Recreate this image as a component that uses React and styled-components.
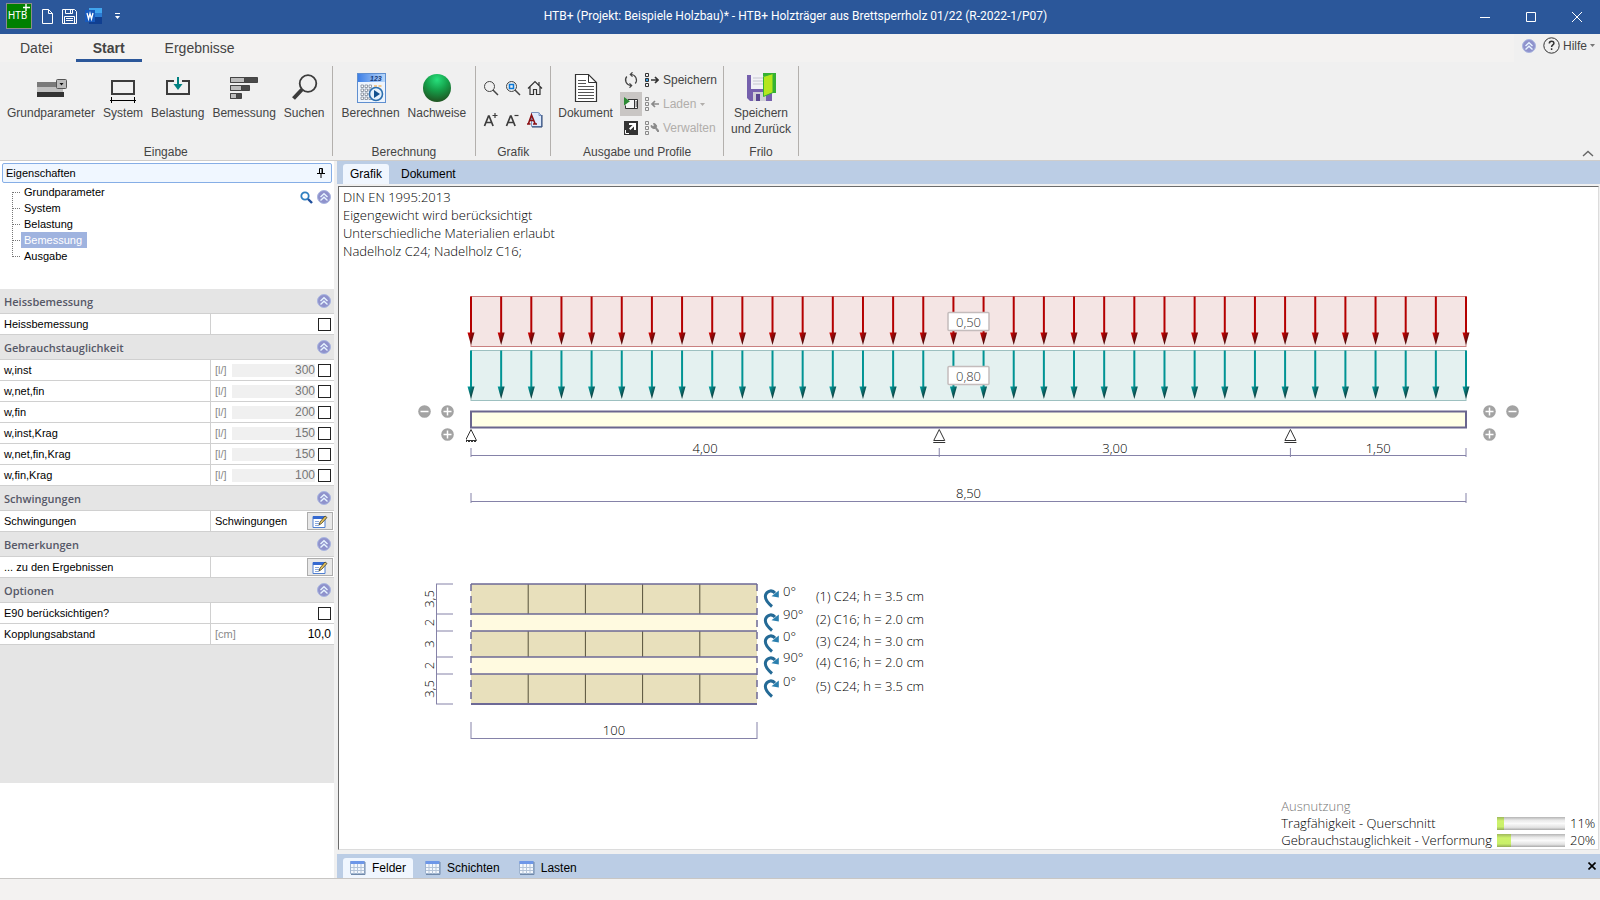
import { useState } from "react";
import styled, { createGlobalStyle } from "styled-components";

const GlobalStyle = createGlobalStyle`
  * {
    box-sizing: border-box;
  }
  body {
    margin: 0;
    background: #f0f0f0;
    color: #444;
    font-family: "Liberation Sans", Arial, sans-serif;
    font-size: 12px;
  }
  button, input {
    font: inherit;
    color: inherit;
    margin: 0;
    padding: 0;
    border: 0;
    background: none;
  }
  svg {
    display: block;
    flex-shrink: 0;
  }
  h1, h2, h3, p, ul, ol {
    margin: 0;
    padding: 0;
    font-weight: inherit;
    font-size: inherit;
    list-style: none;
  }
`;

const Page = styled.div`
  min-height: 100vh;
  display: flex;
  flex-direction: column;
`;

/* ---------- title bar ---------- */

const TitleBar = styled.header`
  height: 34px;
  display: flex;
  align-items: center;
  background: #2b579a;
  color: #fff;
`;

const QuickAccess = styled.div`
  display: flex;
  align-items: center;
  gap: 8px;
  padding: 0 5px 2px 6px;
`;

const IconButton = styled.button`
  display: flex;
  align-items: center;
  justify-content: center;
  min-width: 14px;
`;

const WindowTitle = styled.h1`
  flex: 1;
  text-align: center;
  font-family: Roboto, "Open Sans", sans-serif;
  font-size: 12px;
  line-height: 32px;
  height: 34px;
`;

const WindowButton = styled.button`
  width: 46px;
  height: 34px;
  display: flex;
  align-items: center;
  justify-content: center;
`;

/* ---------- ribbon ---------- */

const TabRow = styled.nav`
  height: 28px;
  display: flex;
  gap: 6px;
  padding-left: 3px;
  background: #f3f2f1;
`;

const RibbonTab = styled.button`
  padding: 2px 17px 0;
  font-size: 14px;
  font-weight: ${(p) => (p.$active ? 700 : 400)};
  border-bottom: 3px solid ${(p) => (p.$active ? "#2b579a" : "transparent")};
`;

const Help = styled.div`
  display: flex;
  align-items: center;
  gap: 7px;
  margin-left: auto;
  padding: 0 5px 5px 8px;
  background: #f0f0f0;
`;

const HelpButton = styled.button`
  display: flex;
  align-items: center;
  gap: 3px;
`;

const Ribbon = styled.section`
  display: flex;
  height: 99px;
  padding-top: 4px;
  border-bottom: 1px solid #cfcdcb;
`;

const Group = styled.div`
  display: flex;
  flex-direction: column;
  justify-content: space-between;
  height: 90px;
  padding: 0 ${(p) => p.$pad || 6}px;
  border-right: 1px solid #b3b0ad;
`;

const GroupBody = styled.div`
  display: flex;
  gap: 6px;
`;

const GroupName = styled.h2`
  text-align: center;
  line-height: 8px;
`;

const BigButton = styled.button`
  display: flex;
  flex-direction: column;
  align-items: center;
  padding: 6px 1px 0;
  line-height: 16px;
  white-space: pre;

  svg {
    margin-bottom: 1px;
  }
`;

const ToolGrid = styled.div`
  display: grid;
  grid-template-columns: repeat(3, 22px);
  grid-auto-rows: 32px;
  padding-top: 6px;
`;

const ProfileGrid = styled.div`
  display: grid;
  grid-template-columns: 22px auto;
  grid-auto-rows: 24px;
  column-gap: 3px;
  padding-top: 2px;
`;

const ToolButton = styled.button`
  display: flex;
  align-items: center;
  justify-content: center;
  background: ${(p) => (p.$on ? "#c9c6c4" : "none")};
`;

const ProfileButton = styled.button`
  display: flex;
  align-items: center;
  gap: 4px;
  color: #444;

  &:disabled {
    color: #b1aeab;
  }
`;

const Collapse = styled.button`
  margin: auto 6px 3px auto;
`;

/* ---------- workspace ---------- */

const Workspace = styled.main`
  flex: 1;
  display: flex;
  gap: 3px;
`;

const Sidebar = styled.aside`
  width: 334px;
  display: flex;
  flex-direction: column;
  background: #fff;
  color: #000;
  font-size: 11px;
`;

const PanelTitle = styled.div`
  display: flex;
  align-items: center;
  justify-content: space-between;
  height: 20px;
  margin: 2px 2px 1px;
  padding: 0 6px 0 3px;
  border: 1px solid #86aee6;
  border-radius: 2px;
  background: #f0f7ff;
`;

const TreeArea = styled.div`
  display: flex;
  justify-content: space-between;
  height: 105px;
  padding-left: 12px;
`;

const TreeItem = styled.li`
  display: flex;
  height: 16px;
`;

const TreeLink = styled.a`
  padding: 0 5px 0 3px;
  line-height: 16px;
  text-decoration: none;
  color: ${(p) => (p.$selected ? "#fff" : "#000")};
  background: ${(p) => (p.$selected ? "#9fb3df" : "none")};
`;

const TreeTools = styled.div`
  display: flex;
  align-items: center;
  gap: 4px;
  height: 16px;
  margin: 5px 3px 0 0;
`;

const SectionHead = styled.h3`
  display: flex;
  align-items: center;
  justify-content: space-between;
  height: 25px;
  padding: 0 3px 0 4px;
  border-bottom: 1px solid #d0d0d0;
  background: #e5e5e5;
  color: #565867;
  font-family: "Open Sans", "Noto Sans", sans-serif;
  font-weight: 600;
  font-size: 11px;
`;

const PropRow = styled.div`
  display: grid;
  grid-template-columns: 211px 1fr;
  height: 21px;
  border-bottom: 1px solid #d0d0d0;
`;

const PropName = styled.label`
  padding-left: 4px;
  border-right: 1px solid #d0d0d0;
  line-height: 20px;
`;

const PropValue = styled.div`
  display: flex;
  align-items: center;
  justify-content: flex-end;
  gap: 3px;
  min-width: 0;
  padding: 0 3px 0 4px;
`;

const Unit = styled.span`
  color: #8a8a8a;
  margin-right: auto;
`;

const NumberInput = styled.input`
  width: ${(p) => (p.disabled ? 83 : 60)}px;
  height: 13px;
  font-size: 12px;
  text-align: right;
  color: ${(p) => (p.disabled ? "#777" : "#000")};
  background: ${(p) => (p.disabled ? "#f0f0f0" : "#fff")};
`;

const TextInput = styled.input`
  flex: 1;
  min-width: 0;
`;

const Check = styled.input`
  appearance: none;
  width: 13px;
  height: 13px;
  border: 1px solid #222;
  background: #fff;

  &:checked {
    background: #2b579a;
  }
`;

const EditButton = styled.button`
  display: flex;
  align-items: center;
  justify-content: center;
  width: 26px;
  height: 18px;
  margin-right: -2px;
  border: 1px solid #adadad;
  background: #e8e8e8;
`;

const Filler = styled.div`
  height: 138px;
  background: #e5e5e5;
`;

const Content = styled.section`
  flex: 1;
  min-width: 0;
  display: flex;
  flex-direction: column;
`;

const TabStrip = styled.div`
  display: flex;
  align-items: flex-end;
  height: ${(p) => (p.$bottom ? 24 : 23)}px;
  padding: 0 4px 0 6px;
  background: #bbcde5;
`;

const ViewTab = styled.button`
  display: flex;
  align-items: center;
  gap: 6px;
  height: 20px;
  padding: 0 7px;
  margin-right: 5px;
  border-radius: 3px 3px 0 0;
  color: #000;
  background: ${(p) => (p.$active ? "#f0f6fe" : "none")};
`;

const CloseTab = styled.button`
  margin: auto 0 auto auto;
`;

const Canvas = styled.div`
  flex: 1;
  display: flex;
  flex-direction: column;
  margin: 2px 1px 4px;
  border: 1px solid #dcdcdc;
  border-top-color: #6b6b6b;
  border-left-color: #6b6b6b;
  background: #fff;
  color: #000;
  font-family: "Open Sans", "Noto Sans", sans-serif;
  font-weight: 300;
  font-size: 13px;
`;

const Notes = styled.div`
  padding: 1px 0 0 4px;
  line-height: 18px;
`;

const BeamRow = styled.div`
  display: flex;
  gap: 12px;
  margin-top: 30px;
  padding: 0 79px;
`;

const BeamSvg = styled.svg`
  flex: 1;
  min-width: 0;
  height: auto;
`;

const Nodes = styled.div`
  display: grid;
  grid-template-columns: 13px 13px;
  grid-auto-rows: 13px;
  gap: 10px;
  margin-top: 115px;
  direction: ${(p) => (p.$mirror ? "rtl" : "ltr")};

  button:last-child {
    grid-column: 2;
  }
`;

const SectionRow = styled.div`
  display: flex;
  margin-top: 68px;
  padding-left: 79px;
`;

const Layers = styled.ol`
  padding-top: 5px;
`;

const Layer = styled.li`
  display: grid;
  grid-template-columns: 20px 33px auto;
  grid-template-rows: 100%;
  align-items: center;
  height: ${(p) => p.$h}px;
  line-height: 17px;
`;

const Angle = styled.span`
  padding-bottom: 14px;
`;

const LayerText = styled.span`
  padding-bottom: 4px;
`;

const Usage = styled.div`
  display: grid;
  grid-template-columns: auto 68px 24px;
  grid-auto-rows: 17px;
  column-gap: 5px;
  align-items: center;
  margin: auto 4px 0 auto;
  line-height: 17px;
`;

const UsageTitle = styled.h2`
  grid-column: 1 / -1;
  color: #777;
`;

const Meter = styled.div`
  height: 13px;
  background: linear-gradient(#b4b4b4, #e9e9e9 25%, #fafafa 50%, #e2e2e2 80%, #aaa);
`;

const MeterFill = styled.div`
  height: 13px;
  background: linear-gradient(#9fb85c, #cdf26c 30%, #c9f06a 75%, #93ab58);
`;

const StatusBar = styled.footer`
  height: 22px;
  border-top: 1px solid #c8c6c4;
  background: #f3f2f1;
`;

/* ---------- icons ---------- */

const AppLogo = () => (
  <svg width="26" height="26" viewBox="0 0 26 26">
    <rect x=".5" y=".5" width="25" height="25" fill="#008000" stroke="#8c8c8c" />
    <text x="2" y="16" fill="#fff" fontSize="10" fontFamily="Roboto, sans-serif">HTB</text>
    <path d="M20 1v7M17 4.500h7" stroke="#fff" strokeWidth="1.400" />
  </svg>
);

const NewIcon = () => (
  <svg width="11" height="15" viewBox="0 0 11 15" fill="none" stroke="#fff">
    <path d="M.5.5h6l4 4v10h-10zM6.500.5v4h4" />
  </svg>
);

const DiskIcon = () => (
  <svg width="15" height="15" viewBox="0 0 15 15" fill="none" stroke="#fff">
    <path d="M.5.5h12l2 2v12h-14zM3.500.5v4h7v-4M8.500 1v3M2.500 14.500v-7h10v7M4 9.500h7M4 11.500h7" />
  </svg>
);

const WordIcon = () => (
  <svg width="17" height="16" viewBox="0 0 17 16">
    <path d="M4 0h13v5H4z" fill="#41a5ee" />
    <path d="M4 5h13v4H4z" fill="#2b7cd3" />
    <path d="M4 9h13v7H4z" fill="#103f91" />
    <path d="M0 2h10v12H0z" fill="#185abd" />
    <path d="M2 5l1.500 6L5 5.500 6.500 11 8 5" fill="none" stroke="#fff" strokeWidth="1.300" />
  </svg>
);

const MoreIcon = () => (
  <svg width="5" height="6" viewBox="0 0 5 6" fill="#fff">
    <path d="M0 0h5v1H0zM0 3h5L2.500 6z" />
  </svg>
);

const UpIcon = () => (
  <svg width="14" height="14" viewBox="0 0 14 14">
    <circle cx="7" cy="7" r="6.500" fill="#8f92cc" stroke="#a9b6e0" />
    <path d="M3.500 7L7 3.700 10.500 7M3.500 10.500L7 7.200l3.500 3.300" fill="none" stroke="#e6f4ff" strokeWidth="1.400" />
  </svg>
);

const HelpIcon = () => (
  <svg width="17" height="17" viewBox="0 0 17 17" fill="none" stroke="#333">
    <circle cx="8.500" cy="8.500" r="7.700" />
    <path d="M6.300 6.500c0-3 4.600-3 4.600-.3 0 1.700-2.300 1.800-2.300 3.800M8.600 11.300v1.700" strokeWidth="1.500" />
  </svg>
);

const Caret = ({ color = "#777" }) => (
  <svg width="5" height="3" viewBox="0 0 5 3" fill={color}>
    <path d="M0 0h5L2.500 3z" />
  </svg>
);

const BaseIcon = () => (
  <svg width="32" height="32" viewBox="0 0 32 32">
    <path d="M2 10h26v5H2z" fill="#7a7a7a" />
    <path d="M2 15h26v5H2z" fill="#c0c0c0" />
    <path d="M2 20h27v5H2z" fill="#333" />
    <rect x="21.500" y="7.500" width="10" height="9" rx="1" fill="#bbb" stroke="#555" />
    <path d="M24.500 11h4l-2 2.500z" fill="#111" />
  </svg>
);

const SystemIcon = () => (
  <svg width="32" height="32" viewBox="0 0 32 32" fill="none" stroke="#3c3c3c">
    <path d="M5 9h22v13H5z" strokeWidth="2" />
    <path d="M3 28.500h26M4.500 25v6M27.500 25v6" stroke="#000" />
  </svg>
);

const LoadIcon = () => (
  <svg width="32" height="32" viewBox="0 0 32 32" fill="none">
    <path d="M5 9h22v13H5z" stroke="#3c3c3c" strokeWidth="2" />
    <path d="M12 7h8v4h-8z" fill="#f0f0f0" />
    <path d="M16 5v10" stroke="#008080" strokeWidth="2" />
    <path d="M11.500 12h9L16 18z" fill="#008080" />
  </svg>
);

const DesignIcon = () => (
  <svg width="32" height="32" viewBox="0 0 32 32" stroke="#444">
    <path d="M2.500 5.500h27v5h-27zM2.500 13.500h19v5h-19zM2.500 21.500h11v5h-11z" fill="#4a4a4a" />
    <path d="M2.500 5.500h14v5h-14zM2.500 13.500h11v5h-11zM2.500 21.500h6v5h-6z" fill="#bdbdbd" />
  </svg>
);

const SearchIcon = () => (
  <svg width="32" height="32" viewBox="0 0 32 32" fill="none" stroke="#3c3c3c">
    <circle cx="20" cy="11.500" r="8.300" strokeWidth="1.800" />
    <path d="M14 17.500L5.500 26.500" strokeWidth="4" />
  </svg>
);

const CalcIcon = () => (
  <svg width="32" height="32" viewBox="0 0 32 32">
    <defs>
      <linearGradient id="calc" x1="0" x2="1">
        <stop offset="0" stopColor="#3f80e6" />
        <stop offset="1" stopColor="#b9d8fb" />
      </linearGradient>
    </defs>
    <path d="M2 1h29v30H2z" fill="#5f8fd0" />
    <path d="M3 10h27v20H3z" fill="#edf4fd" />
    <path d="M3 2h27v8H3z" fill="url(#calc)" />
    <text x="15" y="8.500" fontSize="7" fontStyle="italic" fontWeight="700" fill="#173d7c">123</text>
    <g fill="#fff" stroke="#7f8896" strokeWidth=".8">
      {[13, 17, 21, 25].map((y) =>
        [6, 10, 14].map((x) => <path key={x + "-" + y} d={`M${x} ${y}h2.500v2.500h-2.500z`} />)
      )}
    </g>
    <path d="M19 13h3v2h-3zM23.500 13h3v2h-3z" fill="#f4c98e" />
    <circle cx="21" cy="22" r="6.500" fill="#e4f1fd" stroke="#2d6fae" strokeWidth="1.600" />
    <path d="M19 18l6 4-6 4z" fill="#12518f" />
  </svg>
);

const BallIcon = () => (
  <svg width="32" height="32" viewBox="0 0 32 32">
    <defs>
      <radialGradient id="ball" cx=".5" cy=".2" r=".85">
        <stop offset="0" stopColor="#27e07c" />
        <stop offset=".45" stopColor="#15a04a" />
        <stop offset="1" stopColor="#204a1c" />
      </radialGradient>
    </defs>
    <circle cx="16" cy="16" r="14" fill="url(#ball)" />
  </svg>
);

const ZoomIcon = ({ fit }) => (
  <svg width="16" height="16" viewBox="0 0 16 16" fill="none" stroke="#444">
    <circle cx="6.500" cy="6.500" r="5" />
    <path d="M10 10l5 5" strokeWidth="1.500" />
    {fit && <path d="M4.500 4.500h4v4h-4z" stroke="#0a78d7" strokeWidth="1.500" />}
  </svg>
);

const HomeIcon = () => (
  <svg width="16" height="16" viewBox="0 0 16 16" fill="none" stroke="#333" strokeWidth="1.200">
    <path d="M1 8.500L8 1.500l7 7M3 7v7.500h3.500v-5h3v5H13V7M12 2v3" />
  </svg>
);

const FontSizeIcon = ({ plus }) => (
  <svg width="16" height="16" viewBox="0 0 16 16" fill="none" stroke="#3c3c3c">
    <path d="M1.500 14L5.500 4h.6l4 10M3 10.500h5.500" strokeWidth="1.700" />
    <path d={plus ? "M9.500 3.500h5M12 1v5" : "M9.500 3.500h4"} strokeWidth="1.200" />
  </svg>
);

const FontPageIcon = () => (
  <svg width="16" height="16" viewBox="0 0 16 16">
    <path d="M4.500.5h7l3 3v11h-10z" fill="#dfeafc" stroke="#7b94c0" />
    <path d="M12 .5v3h3" fill="none" stroke="#7b94c0" />
    <path d="M15 3v12H5" fill="none" stroke="#27406f" />
    <path d="M1.500 11.500L4.500 3 8 11.500M3 8.500h4M0 12h3.500M6 12h4" fill="none" stroke="#8b1014" strokeWidth="1.600" />
  </svg>
);

const DocumentIcon = () => (
  <svg width="32" height="32" viewBox="0 0 32 32" fill="none" stroke="#333">
    <path d="M5.500 2.500h13l8 8v19h-21z" fill="#fff" strokeWidth="1.200" />
    <path d="M18.500 2.500v8h8" />
    <path d="M8 8.500h8M8 11.500h8M8 14.500h16M8 17.500h16M8 20.500h16M8 23.500h16M8 26.500h16" stroke="#555" />
  </svg>
);

const RefreshIcon = () => (
  <svg width="16" height="16" viewBox="0 0 16 16" fill="none" stroke="#444" strokeWidth="1.200">
    <path d="M7.500 2.500H8a5.500 5.500 0 0 1 4.200 9M8.500 13.500H8a5.500 5.500 0 0 1-4.200-9" />
    <path d="M9.500.3L7.300 2.500l2.200 2.200M6.500 11.300l2.200 2.200-2.200 2.200" />
  </svg>
);

const PreviewIcon = () => (
  <svg width="16" height="14" viewBox="0 0 16 14">
    <path d="M5 2.500h9.500v9h-12v-3" fill="#f5f5f5" stroke="#333" />
    <path d="M11.500 3v8" stroke="#333" />
    <path d="M12.500 5h2M12.500 7h2M12.500 9h2" stroke="#333" />
    <path d="M1 0v8.500l6-4.200z" fill="#2c8a34" />
  </svg>
);

const PopOutIcon = () => (
  <svg width="14" height="14" viewBox="0 0 14 14">
    <path d="M0 0h14v14H0z" fill="#333" />
    <path d="M5 2h7v7h-2V5.400L6.400 9 5 7.600 8.600 4H5z" fill="#fff" />
    <path d="M1.500 9v3.500H5" fill="none" stroke="#fff" />
  </svg>
);

const profileMarks = {
  save: "M6 7h7M10 4l3 3-3 3",
  load: "M14 7H7M10 4L7 7l3 3",
};

const ProfileIcon = ({ kind }) => {
  const on = kind === "save";
  return (
    <svg width="14" height="14" viewBox="0 0 14 14" fill="none" stroke={on ? "#333" : "#8a8a8a"}>
      <path d="M.5.5h3v3h-3zM.5 10.500h3v3h-3z" />
      <path d="M.5 5.500h3v3h-3z" fill={on ? "#3aa0e8" : "none"} />
      {kind === "manage" ? (
        <path d="M6 4.500a3 3 0 0 0 4.300 2.800L13 11l1-1.200-2.700-3A3 3 0 0 0 8.500 2.500l1 2-1.500 1z" fill="#8a8a8a" />
      ) : (
        <path d={profileMarks[kind]} strokeWidth="1.700" />
      )}
    </svg>
  );
};

const SaveBackIcon = () => (
  <svg width="32" height="32" viewBox="0 0 32 32">
    <path d="M2 3h25v26H5l-3-3z" fill="#7560ad" />
    <path d="M6 3h14v14H6z" fill="#f2f2f6" />
    <path d="M8 6h10M8 9h10M8 12h10" stroke="#c6c6d0" />
    <path d="M8 20h13v9H8z" fill="#cfcfd6" />
    <path d="M11 22h4v7h-4z" fill="#5a4790" />
    <path d="M18 1h13v20h-3V4H18z" fill="#35b233" />
    <path d="M18.500 4.500L28 1.500v19l-9.500 4z" fill="#b5e61d" stroke="#35b233" />
  </svg>
);

const ChevronIcon = () => (
  <svg width="12" height="7" viewBox="0 0 12 7" fill="none" stroke="#666" strokeWidth="1.400">
    <path d="M1 6l5-4.500L11 6" />
  </svg>
);

const PinIcon = () => (
  <svg width="8" height="10" viewBox="0 0 8 10" fill="none" stroke="#000">
    <path d="M2.500 5.500v-5h3v5M5 1v4.500M0 5.500h8M4 6v4" />
  </svg>
);

const LensIcon = () => (
  <svg width="13" height="13" viewBox="0 0 13 13" fill="none">
    <circle cx="5" cy="5" r="3.700" stroke="#2f7fc0" strokeWidth="1.800" />
    <path d="M8 8l4 4" stroke="#1f4f9c" strokeWidth="2.400" />
  </svg>
);

const EditIcon = () => (
  <svg width="16" height="13" viewBox="0 0 16 13">
    <path d="M1 1.500h12v11H1z" fill="#fff" stroke="#4f7fd0" />
    <path d="M1 1h12v3H1z" fill="#3569d0" />
    <path d="M3 6.500h4M3 8.500h4M3 10.500h4" stroke="#8ba9dc" />
    <path d="M7 10l1-3 5-6 2 1.500-5.500 6z" fill="#e5c15c" stroke="#3d3d2a" strokeWidth=".8" />
  </svg>
);

const TableIcon = () => (
  <svg width="16" height="14" viewBox="0 0 16 14">
    <path d="M.5.5h14v12H.5z" fill="#f4f8fd" stroke="#9fb4cf" />
    <path d="M.5 0h14v3H.5z" fill="#6d97e8" />
    <path d="M4 3v10M7.500 3v10M11 3v10M1 6.500h14M1 9.500h14" stroke="#b4c4d8" />
    <path d="M15 1v12.500H1" fill="none" stroke="#7089aa" />
  </svg>
);

const CrossIcon = () => (
  <svg width="8" height="8" viewBox="0 0 8 8" stroke="#000" strokeWidth="1.600">
    <path d="M.5.5l7 7M7.500.5l-7 7" />
  </svg>
);

const NodeIcon = ({ plus }) => (
  <svg width="13" height="13" viewBox="0 0 13 13">
    <circle cx="6.500" cy="6.500" r="6.300" fill="#a3a3a3" />
    <path d={plus ? "M2.500 6.500h8M6.500 2.500v8" : "M2.500 6.500h8"} stroke="#fff" strokeWidth="1.500" />
  </svg>
);

const RotateIcon = () => (
  <svg width="17" height="20" viewBox="0 0 17 20">
    <path d="M9 18.500C3 13.500 1.200 9.500 3 6 5 2.300 9.500 1.800 12 5" fill="none" stroke="#246a96" strokeWidth="3" />
    <path d="M15.800 2.500v7l-7.300-1.200z" fill="#2a7fae" />
  </svg>
);

/* ---------- drawings ---------- */

const SPANS = [4, 3, 1.5];
const TOTAL = 8.5;
const LEFT = 5;
const SCALE = 995 / TOTAL;
const ARROWS = 33;

function Load({ y, value, color, dark, fill, line, id }) {
  const xs = Array.from({ length: ARROWS + 1 }, (_, i) => LEFT + (i * 995) / ARROWS);
  return (
    <g>
      <defs>
        <linearGradient id={id} x1="0" x2="1" y1="0" y2="1">
          <stop offset="0" stopColor={color} />
          <stop offset="1" stopColor="#111" />
        </linearGradient>
      </defs>
      <rect x={LEFT} y={y} width="995" height="50" fill={fill} stroke={line} />
      {xs.map((x) => (
        <g key={x}>
          <path d={`M${x} ${y}v37`} stroke={dark} strokeWidth="2" />
          <path d={`M${x - 3.5} ${y + 36}h7l-3.500 12.500z`} fill={`url(#${id})`} />
        </g>
      ))}
      <rect x="482" y={y + 16} width="41" height="18" rx="1" fill="#fff" stroke="#c4bcbc" strokeWidth="1.500" />
      <text x="502.500" y={y + 30} textAnchor="middle" fill="#333">{value}</text>
    </g>
  );
}

function Support({ x, fixed }) {
  return (
    <g fill="none" stroke="#333">
      <path d={`M${x} 139.500l-5.500 11h11z`} />
      {fixed ? (
        <path d={`M${x - 6} 151.500h12`} strokeDasharray="2 1" />
      ) : (
        <path d={`M${x - 6} 152.500h12`} />
      )}
    </g>
  );
}

function Beam() {
  const stops = SPANS.reduce((acc, s) => [...acc, acc[acc.length - 1] + s], [0]);
  const pos = stops.map((s) => LEFT + s * SCALE);
  return (
    <BeamSvg viewBox="0 0 1005 220" role="img" aria-label="Träger" fontSize="13" fill="#000">
      <Load id="red" y={6.5} value="0,50" color="#e00000" dark="#b40000" fill="#f4e5e4" line="#c98080" />
      <Load id="teal" y={60.5} value="0,80" color="#00a8a8" dark="#009494" fill="#e4f1f0" line="#9dc0c0" />
      <rect x={LEFT} y="121.500" width="995" height="16" fill="#ffffe6" stroke="#6a668e" strokeWidth="2" />
      <Support x={pos[0]} fixed />
      <Support x={pos[1]} />
      <Support x={pos[2]} />
      <g stroke="#8582a8">
        <path d={`M${LEFT} 165.500h995M${LEFT} 211.500h995M${LEFT} 203v10M1000 203v10`} />
        {pos.map((x) => <path key={x} d={`M${x} 158v9`} />)}
      </g>
      {SPANS.map((s, i) => (
        <text key={i} x={(pos[i] + pos[i + 1]) / 2} y="163" textAnchor="middle">
          {s.toFixed(2).replace(".", ",")}
        </text>
      ))}
      <text x="502.500" y="208" textAnchor="middle">8,50</text>
    </BeamSvg>
  );
}

const LAYERS = [
  { h: 30, size: "3,5", angle: "0°", text: "(1) C24; h = 3.5 cm" },
  { h: 17, size: "2", angle: "90°", text: "(2) C16; h = 2.0 cm" },
  { h: 26, size: "3", angle: "0°", text: "(3) C24; h = 3.0 cm" },
  { h: 17, size: "2", angle: "90°", text: "(4) C16; h = 2.0 cm" },
  { h: 30, size: "3,5", angle: "0°", text: "(5) C24; h = 3.5 cm" },
];

function CrossSection() {
  let y = 6;
  const rows = LAYERS.map((l) => {
    const row = { ...l, y };
    y += l.h;
    return row;
  });
  return (
    <svg width="345" height="170" viewBox="0 0 345 170" role="img" aria-label="Querschnitt" fontSize="13" fill="#000">
      {rows.map((r, i) => (
        <g key={i}>
          <rect x="53" y={r.y} width="286" height={r.h} fill={i % 2 ? "#fffae0" : "#e8e0bc"} />
          {i % 2 === 0 && [1, 2, 3, 4].map((n) => (
            <path key={n} d={`M${53 + n * 57.2} ${r.y}v${r.h}`} stroke="#55503a" />
          ))}
          <path d={`M53 ${r.y}h286`} stroke="#6d6996" strokeWidth="1.500" />
          <path d={`M18 ${r.y}h17`} stroke="#8582a8" />
          <text transform={`translate(16 ${r.y + r.h / 2}) rotate(-90)`} textAnchor="middle">{r.size}</text>
        </g>
      ))}
      <path d="M53 126h286" stroke="#6d6996" strokeWidth="2" />
      <path d="M53 6v120M339 6v120" stroke="#6d6996" strokeWidth="1.500" strokeDasharray="7 5" />
      <path d="M18.500 6v120M18 126h17M53 144v17M339 144v17M53 160.500h286" stroke="#8582a8" fill="none" />
      <text x="196" y="157" textAnchor="middle">100</text>
    </svg>
  );
}

/* ---------- property data ---------- */

const TREE = ["Grundparameter", "System", "Belastung", "Bemessung", "Ausgabe"];

const SECTIONS = [
  { title: "Heissbemessung", rows: [{ name: "Heissbemessung", type: "check" }] },
  {
    title: "Gebrauchstauglichkeit",
    rows: [
      { name: "w,inst", type: "limit", value: "300" },
      { name: "w,net,fin", type: "limit", value: "300" },
      { name: "w,fin", type: "limit", value: "200" },
      { name: "w,inst,Krag", type: "limit", value: "150" },
      { name: "w,net,fin,Krag", type: "limit", value: "150" },
      { name: "w,fin,Krag", type: "limit", value: "100" },
    ],
  },
  { title: "Schwingungen", rows: [{ name: "Schwingungen", type: "edit", value: "Schwingungen" }] },
  { title: "Bemerkungen", rows: [{ name: "... zu den Ergebnissen", type: "edit", value: "" }] },
  {
    title: "Optionen",
    rows: [
      { name: "E90 berücksichtigen?", type: "check" },
      { name: "Kopplungsabstand", type: "number", value: "10,0" },
    ],
  },
];

function Property({ id, name, type, value }) {
  return (
    <PropRow>
      <PropName htmlFor={id}>{name}</PropName>
      <PropValue>
        {type === "limit" && (
          <>
            <Unit>[l/]</Unit>
            <NumberInput aria-label={name + " Grenzwert"} defaultValue={value} disabled />
          </>
        )}
        {type === "number" && (
          <>
            <Unit>[cm]</Unit>
            <NumberInput id={id} defaultValue={value} />
          </>
        )}
        {type === "edit" && (
          <>
            <TextInput id={id} defaultValue={value} />
            <EditButton aria-label={name + " bearbeiten"}><EditIcon /></EditButton>
          </>
        )}
        {(type === "check" || type === "limit") && <Check id={id} type="checkbox" />}
      </PropValue>
    </PropRow>
  );
}

function Properties() {
  const [selected, setSelected] = useState("Bemessung");
  return (
    <Sidebar>
      <PanelTitle>
        Eigenschaften
        <button aria-label="Anheften"><PinIcon /></button>
      </PanelTitle>
      <TreeArea>
        <ul>
          {TREE.map((t, i) => (
            <TreeItem key={t}>
              <svg width="9" height="16" viewBox="0 0 9 16" fill="none" stroke="#777" strokeDasharray="1 1">
                <path d={`M.5 ${i ? 0 : 8}V${i < TREE.length - 1 ? 16 : 9}M1 8.500h8`} />
              </svg>
              <TreeLink href="#" $selected={t === selected} onClick={() => setSelected(t)}>{t}</TreeLink>
            </TreeItem>
          ))}
        </ul>
        <TreeTools>
          <button aria-label="Suchen"><LensIcon /></button>
          <button aria-label="Alle zuklappen"><UpIcon /></button>
        </TreeTools>
      </TreeArea>
      {SECTIONS.map((s, i) => (
        <div key={s.title}>
          <SectionHead>
            {s.title}
            <button aria-label={s.title + " zuklappen"}><UpIcon /></button>
          </SectionHead>
          {s.rows.map((r, j) => <Property key={r.name} id={`prop-${i}-${j}`} {...r} />)}
        </div>
      ))}
      <Filler />
    </Sidebar>
  );
}

function RibbonBar() {
  return (
    <Ribbon>
      <Group>
        <GroupBody>
          <BigButton><BaseIcon />Grundparameter</BigButton>
          <BigButton><SystemIcon />System</BigButton>
          <BigButton><LoadIcon />Belastung</BigButton>
          <BigButton><DesignIcon />Bemessung</BigButton>
          <BigButton><SearchIcon />Suchen</BigButton>
        </GroupBody>
        <GroupName>Eingabe</GroupName>
      </Group>
      <Group $pad={8}>
        <GroupBody>
          <BigButton><CalcIcon />Berechnen</BigButton>
          <BigButton><BallIcon />Nachweise</BigButton>
        </GroupBody>
        <GroupName>Berechnung</GroupName>
      </Group>
      <Group $pad={4}>
        <ToolGrid>
          <ToolButton aria-label="Zoom"><ZoomIcon /></ToolButton>
          <ToolButton aria-label="Zoom Fenster"><ZoomIcon fit /></ToolButton>
          <ToolButton aria-label="Gesamtansicht"><HomeIcon /></ToolButton>
          <ToolButton aria-label="Schrift größer"><FontSizeIcon plus /></ToolButton>
          <ToolButton aria-label="Schrift kleiner"><FontSizeIcon /></ToolButton>
          <ToolButton aria-label="Schriftart"><FontPageIcon /></ToolButton>
        </ToolGrid>
        <GroupName>Grafik</GroupName>
      </Group>
      <Group>
        <GroupBody>
          <BigButton><DocumentIcon />Dokument</BigButton>
          <ProfileGrid>
            <ToolButton aria-label="Aktualisieren"><RefreshIcon /></ToolButton>
            <ProfileButton><ProfileIcon kind="save" />Speichern</ProfileButton>
            <ToolButton aria-label="Vorschau" $on><PreviewIcon /></ToolButton>
            <ProfileButton disabled><ProfileIcon kind="load" />Laden<Caret color="#b1aeab" /></ProfileButton>
            <ToolButton aria-label="Neues Fenster"><PopOutIcon /></ToolButton>
            <ProfileButton disabled><ProfileIcon kind="manage" />Verwalten</ProfileButton>
          </ProfileGrid>
        </GroupBody>
        <GroupName>Ausgabe und Profile</GroupName>
      </Group>
      <Group>
        <BigButton><SaveBackIcon />{"Speichern\nund Zurück"}</BigButton>
        <GroupName>Frilo</GroupName>
      </Group>
      <Collapse aria-label="Menüband reduzieren"><ChevronIcon /></Collapse>
    </Ribbon>
  );
}

const USAGE = [
  { name: "Tragfähigkeit - Querschnitt", value: 11 },
  { name: "Gebrauchstauglichkeit - Verformung", value: 20 },
];

export default function App() {
  return (
    <Page>
      <GlobalStyle />
      <TitleBar>
        <QuickAccess>
          <AppLogo />
          <IconButton aria-label="Neu"><NewIcon /></IconButton>
          <IconButton aria-label="Speichern"><DiskIcon /></IconButton>
          <IconButton aria-label="Word"><WordIcon /></IconButton>
          <IconButton aria-label="Mehr"><MoreIcon /></IconButton>
        </QuickAccess>
        <WindowTitle>HTB+ (Projekt: Beispiele Holzbau)* - HTB+ Holzträger aus Brettsperrholz 01/22 (R-2022-1/P07)</WindowTitle>
        <WindowButton aria-label="Minimieren">
          <svg width="10" height="10" stroke="#fff"><path d="M0 5.500h10" /></svg>
        </WindowButton>
        <WindowButton aria-label="Maximieren">
          <svg width="10" height="10" stroke="#fff" fill="none"><path d="M.5.5h9v9h-9z" /></svg>
        </WindowButton>
        <WindowButton aria-label="Schließen">
          <svg width="10" height="10" stroke="#fff"><path d="M0 0l10 10M10 0L0 10" /></svg>
        </WindowButton>
      </TitleBar>

      <TabRow>
        <RibbonTab>Datei</RibbonTab>
        <RibbonTab $active>Start</RibbonTab>
        <RibbonTab>Ergebnisse</RibbonTab>
        <Help>
          <button aria-label="Zuklappen"><UpIcon /></button>
          <HelpButton><HelpIcon />Hilfe<Caret /></HelpButton>
        </Help>
      </TabRow>
      <RibbonBar />

      <Workspace>
        <Properties />
        <Content>
          <TabStrip>
            <ViewTab $active>Grafik</ViewTab>
            <ViewTab>Dokument</ViewTab>
          </TabStrip>
          <Canvas>
            <Notes>
              <p>DIN EN 1995:2013</p>
              <p>Eigengewicht wird berücksichtigt</p>
              <p>Unterschiedliche Materialien erlaubt</p>
              <p>Nadelholz C24; Nadelholz C16;</p>
            </Notes>
            <BeamRow>
              <Nodes>
                <button aria-label="Feld links entfernen"><NodeIcon /></button>
                <button aria-label="Feld links einfügen"><NodeIcon plus /></button>
                <button aria-label="Auflager links einfügen"><NodeIcon plus /></button>
              </Nodes>
              <Beam />
              <Nodes $mirror>
                <button aria-label="Feld rechts entfernen"><NodeIcon /></button>
                <button aria-label="Feld rechts einfügen"><NodeIcon plus /></button>
                <button aria-label="Auflager rechts einfügen"><NodeIcon plus /></button>
              </Nodes>
            </BeamRow>
            <SectionRow>
              <CrossSection />
              <Layers>
                {LAYERS.map((l) => (
                  <Layer key={l.text} $h={l.h}>
                    <button aria-label={"Drehen " + l.text}><RotateIcon /></button>
                    <Angle>{l.angle}</Angle>
                    <LayerText>{l.text}</LayerText>
                  </Layer>
                ))}
              </Layers>
            </SectionRow>
            <Usage>
              <UsageTitle>Ausnutzung</UsageTitle>
              {USAGE.map((u) => [
                <span key="n">{u.name}</span>,
                <Meter key="m"><MeterFill style={{ width: u.value + "%" }} /></Meter>,
                <span key="v">{u.value}%</span>,
              ])}
            </Usage>
          </Canvas>
          <TabStrip $bottom>
            <ViewTab $active><TableIcon />Felder</ViewTab>
            <ViewTab><TableIcon />Schichten</ViewTab>
            <ViewTab><TableIcon />Lasten</ViewTab>
            <CloseTab aria-label="Schließen"><CrossIcon /></CloseTab>
          </TabStrip>
        </Content>
      </Workspace>
      <StatusBar />
    </Page>
  );
}
